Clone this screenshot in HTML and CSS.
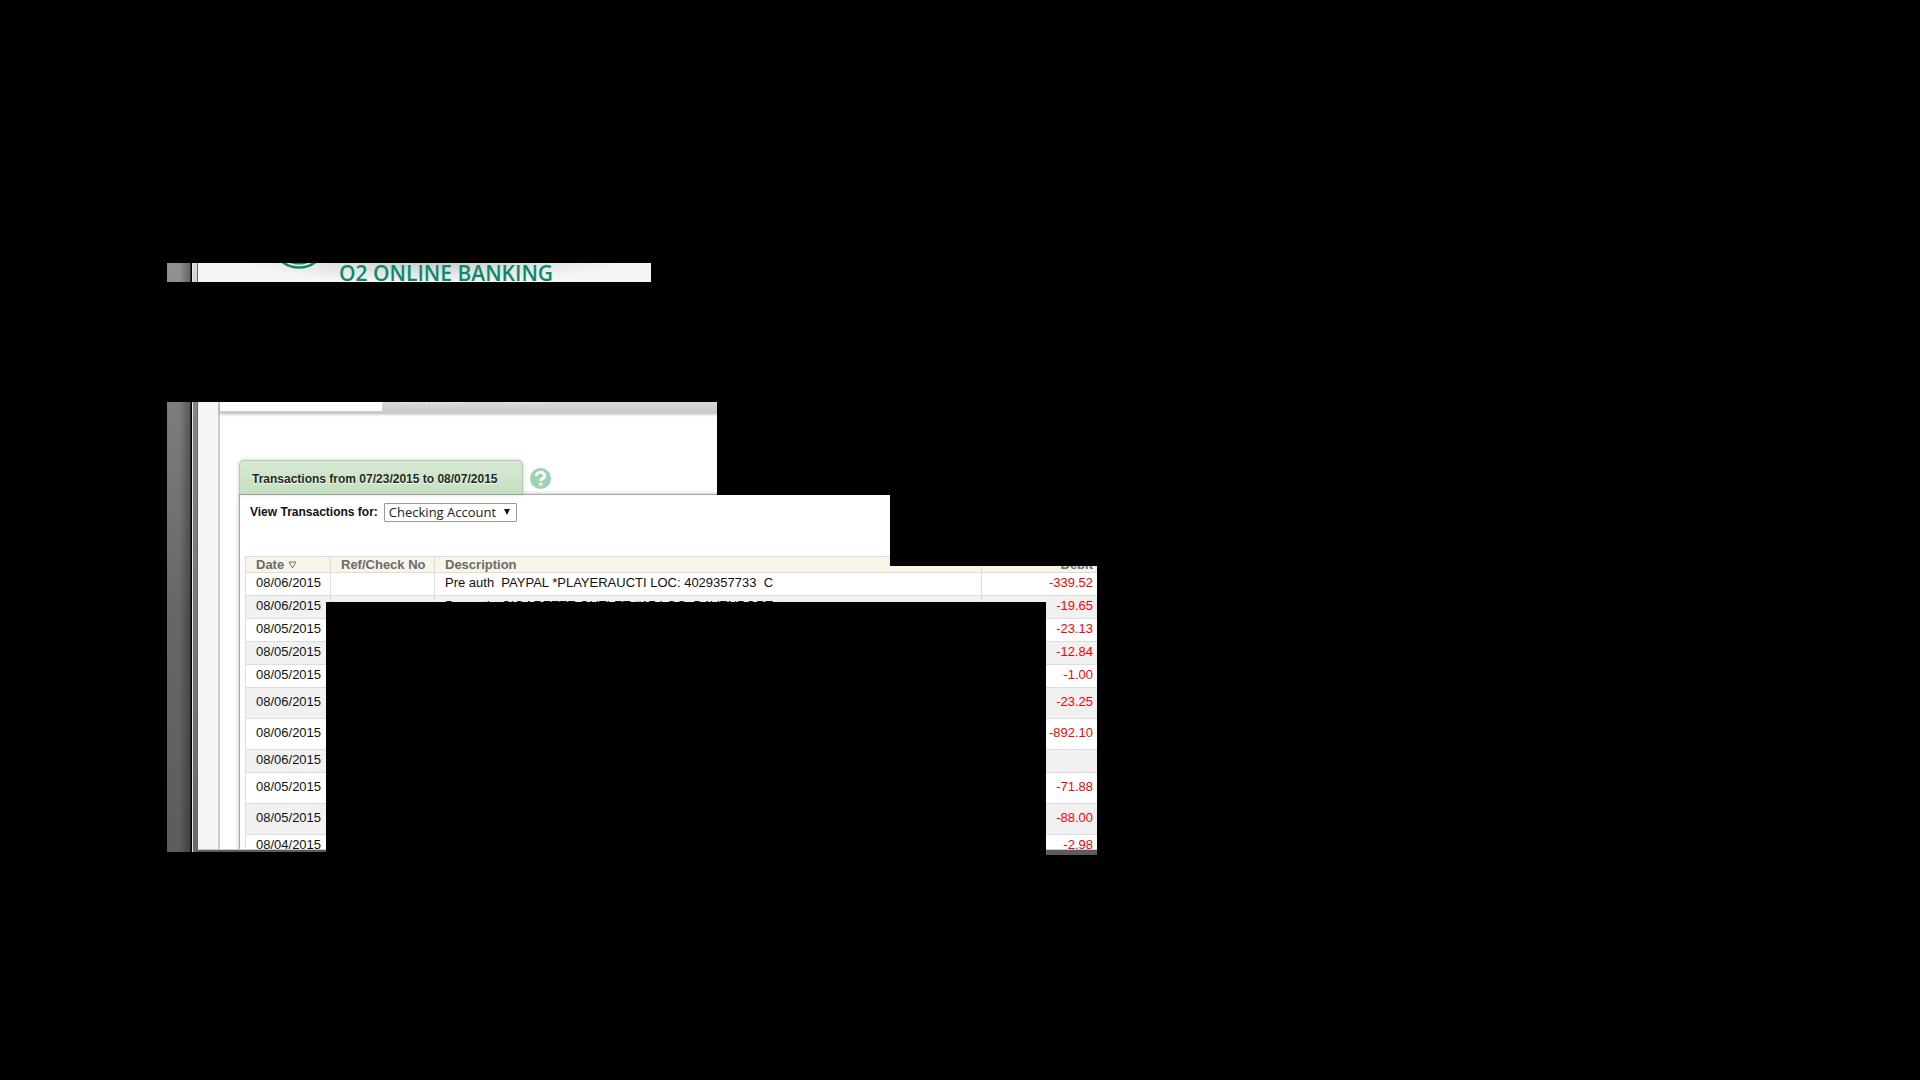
FILE: index.html
```
<!DOCTYPE html>
<html lang="en">
<head>
  <meta charset="UTF-8">
  <meta name="viewport" content="width=device-width, initial-scale=1.0">
  <title>O2 Online Banking</title>
  <link rel="stylesheet" href="styles.css">
</head>
<body>
  <div class="screen">
    <div class="backdrop"></div>
    <div class="window-edge"></div>

    <div class="page">
      <header class="banner">
        <svg class="logo" width="60" height="60" viewBox="0 0 60 60">
          <ellipse cx="30" cy="29" rx="28" ry="28.500" fill="none" stroke="#0d8a68" stroke-width="2.500"/>
          <circle cx="30" cy="29" r="24.500" fill="none" stroke="#0d8a68" stroke-width="2"/>
        </svg>
        <h1>O2 ONLINE BANKING</h1>
      </header>

      <main class="content">
        <nav class="tabs">
          <span class="tab-active"></span>
          <a class="tab" href="#">Download</a>
          <a class="tab" href="#">Search</a>
        </nav>

        <div class="section-title">
          <h2>Transactions from 07/23/2015 to 08/07/2015</h2>
          <svg class="help" width="21" height="21" viewBox="0 0 21 21">
            <circle cx="10.5" cy="10.5" r="10.5" fill="#9fd2b1"/>
            <path d="M6.3 8C6.3 3.2 14.8 3.2 14.8 7.8C14.8 10.6 10.8 10.2 10.8 13" fill="none" stroke="#fff" stroke-width="3"/>
            <rect x="8.9" y="14.4" width="3.8" height="3.2" fill="#e9eeea"/>
          </svg>
        </div>

        <section class="panel">
          <form class="filter">
            <label for="account">View Transactions for:</label>
            <span class="select-box">
              <select id="account">
                <option>Checking Account</option>
              </select>
            </span>
          </form>

          <table class="transactions">
            <thead>
              <tr>
                <th class="date">Date <svg width="9" height="8" viewBox="0 0 9 8"><path d="M1 1H8L4.500 7Z" fill="none" stroke="#777"/></svg></th>
                <th class="ref">Ref/Check No</th>
                <th>Description</th>
                <th class="debit">Debit</th>
              </tr>
            </thead>
            <tbody>
              <tr><td>08/06/2015</td><td></td><td>Pre auth&nbsp; PAYPAL *PLAYERAUCTI LOC: 4029357733&nbsp; C</td><td class="debit">-339.52</td></tr>
              <tr><td>08/06/2015</td><td></td><td>Pre auth&nbsp; CIGARETTE OUTLET #17 LOC: DAVENPORT</td><td class="debit">-19.65</td></tr>
              <tr><td>08/05/2015</td><td></td><td></td><td class="debit">-23.13</td></tr>
              <tr><td>08/05/2015</td><td></td><td></td><td class="debit">-12.84</td></tr>
              <tr><td>08/05/2015</td><td></td><td></td><td class="debit">-1.00</td></tr>
              <tr class="tall"><td>08/06/2015</td><td></td><td></td><td class="debit">-23.25</td></tr>
              <tr class="tall"><td>08/06/2015</td><td></td><td></td><td class="debit">-892.10</td></tr>
              <tr><td>08/06/2015</td><td></td><td></td><td class="debit"></td></tr>
              <tr class="tall"><td>08/05/2015</td><td></td><td></td><td class="debit">-71.88</td></tr>
              <tr class="tall"><td>08/05/2015</td><td></td><td></td><td class="debit">-88.00</td></tr>
              <tr><td>08/04/2015</td><td></td><td></td><td class="debit">-2.98</td></tr>
            </tbody>
          </table>
        </section>
      </main>
    </div>

    <!-- blacked-out areas -->
    <div class="cover cover-banner"></div>
    <div class="cover cover-header"></div>
    <div class="cover cover-nav"></div>
    <div class="cover cover-filter"></div>
    <div class="cover cover-table"></div>
    <div class="cover cover-corner"></div>
  </div>
</body>
</html>
```

FILE: styles.css
```
body {
  margin: 0;
  background: #000;
  font-family: "Liberation Sans", Arial, sans-serif;
  font-size: 13px;
  color: #111;
}

.screen {
  position: relative;
  display: flex;
  max-width: 930px;
  height: 592px;
  margin: 263px 0 0 167px;
  overflow: hidden;
  background: #5c5c5c;
}

.backdrop {
  width: 25px;
  background:
    linear-gradient(to right, rgba(0, 0, 0, 0) 50%, rgba(0, 0, 0, 0.3) 92%, #000 96%),
    linear-gradient(#929292, #7c7c7c 25%, #666 60%, #5c5c5c);
}

.window-edge {
  width: 6px;
  box-sizing: border-box;
  border-left: 1px solid #e8e8e8;
  border-right: 1px solid #666;
  background: linear-gradient(#dcdcdc, #858585 25%, #6a6a6a);
}

.page {
  flex: 1;
  height: 586px;
  overflow: hidden;
  border-bottom: 1px solid #ccc;
  background: #f5f5f5;
}

.banner {
  display: flex;
  height: 139px;
  background: radial-gradient(ellipse 190px 18px at 235px 0, #cecece, rgba(245, 245, 245, 0));
}

.logo {
  margin: -53px 0 0 71px;
}

h1 {
  margin: -5px 0 0 10px;
  font: 600 21px/30px "Open Sans", sans-serif;
  color: #0d8a68;
}

.content {
  margin-left: 20px;
  border-left: 2px solid #ccc;
  background: #fff;
}

.tabs {
  display: flex;
  gap: 40px;
  height: 11px;
  background: linear-gradient(#dadada, #c8c8c8);
  box-shadow: 0 1px 3px rgba(0, 0, 0, 0.3);
}

.tab-active {
  width: 162px;
  height: 9px;
  margin-right: -20px;
  background: #fff;
}

.tab {
  margin-top: -11px;
  font-weight: bold;
  line-height: 15px;
  color: #e8e8e8;
  text-decoration: none;
}

.section-title {
  display: flex;
  align-items: center;
  gap: 7px;
  margin: 47px 0 0 19px;
}

h2 {
  box-sizing: border-box;
  height: 34px;
  margin: 0;
  padding: 0 25px 0 12px;
  border: 1px solid #b4c8b4;
  border-bottom: 0;
  border-radius: 5px 5px 0 0;
  background: linear-gradient(#d8e9d4, #c4dfc0);
  box-shadow: 0 0 4px rgba(0, 0, 0, 0.2);
  font-size: 12px;
  line-height: 36px;
  color: #1c2c1c;
  text-shadow: 0 1px 1px #fff;
}

.help {
  margin-top: 2px;
}

.panel {
  margin-left: 19px;
  border: 1px solid #aaa;
  border-right: 0;
  box-shadow: 0 0 4px rgba(0, 0, 0, 0.3);
  background: #fff;
}

.filter {
  display: flex;
  gap: 6px;
  height: 53px;
  padding: 8px 0 0 10px;
}

label {
  font-size: 12px;
  font-weight: bold;
  line-height: 18px;
}

.select-box {
  position: relative;
  height: 19px;
}

.select-box::after {
  content: "";
  position: absolute;
  top: 6px;
  right: 7px;
  border: 3px solid transparent;
  border-top: 6px solid #111;
  border-bottom: 0;
}

select {
  width: 133px;
  height: 19px;
  padding: 0 4px;
  border: 1px solid #999;
  border-radius: 1px;
  appearance: none;
  background: #fff;
  font: 13px/17px "Open Sans", sans-serif;
  color: #222;
}

.transactions {
  width: calc(100% - 5px);
  margin-left: 5px;
  border-spacing: 0;
  table-layout: fixed;
}

th,
td {
  box-sizing: border-box;
  height: 23px;
  padding: 0 10px;
  border-bottom: 1px solid #ddd;
  border-left: 1px solid #ddd;
  text-align: left;
  white-space: nowrap;
}

td {
  padding-bottom: 4px;
}

th {
  height: 17px;
  border-top: 1px solid #ddd;
  background: #f8f4e8;
  line-height: 15px;
  color: #6b6b6b;
}

tbody tr:nth-child(even) {
  background: #f1f1f1;
}

.tall td {
  height: 31px;
}

.date {
  width: 85px;
}

.ref {
  width: 104px;
}

.debit {
  width: 116px;
  padding-right: 4px;
  text-align: right;
}

td.debit {
  color: #f00;
}

.cover {
  position: absolute;
  background: #000;
}

.cover-banner {
  top: 0;
  left: 484px;
  right: 0;
  height: 139px;
}

.cover-header {
  top: 19px;
  left: 0;
  right: 0;
  height: 120px;
}

.cover-nav {
  top: 139px;
  left: 550px;
  right: 0;
  height: 93px;
}

.cover-filter {
  top: 232px;
  left: 723px;
  right: 0;
  height: 71px;
}

.cover-table {
  top: 339px;
  bottom: 0;
  left: 159px;
  right: 51px;
}

.cover-corner {
  bottom: 0;
  left: 0;
  width: 159px;
  height: 3px;
}
```
